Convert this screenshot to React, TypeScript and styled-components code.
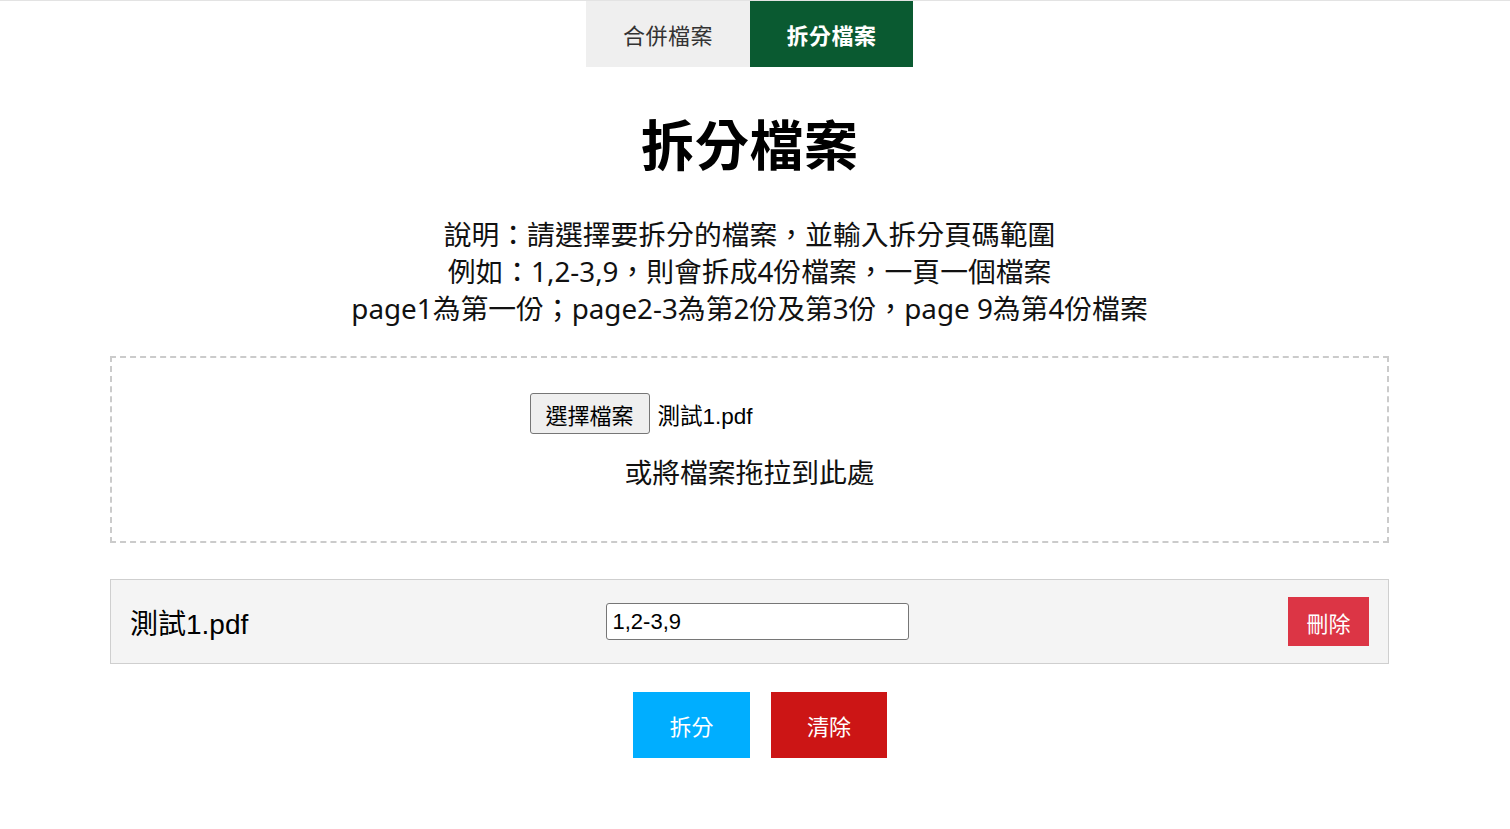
import React from "react";
import styled, { createGlobalStyle } from "styled-components";

const GlobalStyle = createGlobalStyle`
  html, body { margin: 0; padding: 0; background: #fff; }
  body {
    font-family: "Noto Sans", "Noto Sans CJK TC", sans-serif;
    color: #000;
    border-top: 1px solid #e3e3e3;
  }
  * { box-sizing: border-box; }
`;

const Page = styled.div`
  width: calc(100% - 11px);
  display: flex;
  flex-direction: column;
  align-items: center;
`;

const Tabs = styled.nav`
  display: flex;
`;

const Tab = styled.button<{ $active?: boolean }>`
  width: ${(p) => (p.$active ? "163px" : "164px")};
  height: 66px;
  border: none;
  margin: 0;
  padding: 0;
  font-family: "Noto Sans CJK TC", sans-serif;
  font-size: 22px;
  letter-spacing: 0.5px;
  font-weight: ${(p) => (p.$active ? 700 : 400)};
  background: ${(p) => (p.$active ? "#0a5a31" : "#efefef")};
  color: ${(p) => (p.$active ? "#fff" : "#333")};
  cursor: pointer;
`;

const Title = styled.h1`
  margin: 44px 0 0;
  font-family: "Noto Sans CJK TC", sans-serif;
  font-size: 54px;
  line-height: 64px;
  font-weight: 700;
  letter-spacing: 0.5px;
`;

const Description = styled.p`
  margin: 41px 0 0;
  font-family: "Noto Sans", "Noto Sans CJK TC", sans-serif;
  font-size: 27.8px;
  line-height: 37px;
  text-align: center;
  color: #111;
`;

const DescLine = styled.span`
  display: block;
  white-space: nowrap;
`;

const DropZone = styled.div`
  margin-top: 29px;
  width: 1279px;
  height: 187px;
  border: 2px dashed #cbcbcb;
  display: flex;
  flex-direction: column;
  align-items: center;
  padding-top: 35px;
`;

const FileInput = styled.div`
  width: 440px;
  display: flex;
  align-items: center;
  gap: 8px;
`;

const ChooseButton = styled.button`
  width: 120px;
  height: 41px;
  background: #efefef;
  border: 1px solid #767676;
  border-radius: 3px;
  font-family: "Noto Sans CJK TC", sans-serif;
  font-size: 22px;
  color: #000;
  padding: 0;
  line-height: 1;
`;

const FileName = styled.span`
  font-family: "Liberation Sans", "Noto Sans CJK TC", sans-serif;
  font-size: 22.5px;
  color: #000;
`;

const DropHint = styled.div`
  margin-top: 17px;
  font-family: "Noto Sans CJK TC", sans-serif;
  font-size: 27.8px;
  line-height: 40px;
  color: #111;
`;

const FileRow = styled.div`
  margin-top: 36px;
  width: 1279px;
  height: 85px;
  background: #f4f4f4;
  border: 1px solid #cfcfcf;
  display: flex;
  align-items: center;
  justify-content: space-between;
  padding: 0 19px 0 19px;
`;

const RowName = styled.span`
  font-family: "Liberation Sans", "Noto Sans CJK TC", sans-serif;
  font-size: 28px;
  color: #000;
  width: 118px;
  white-space: nowrap;
`;

const RangeInput = styled.input`
  width: 303px;
  height: 37px;
  margin-right: 22px;
  border: 1px solid #767676;
  border-radius: 3px;
  background: #fff;
  padding: 0 6px;
  font-family: "Liberation Sans", sans-serif;
  font-size: 22px;
  color: #000;
  outline: none;
`;

const DeleteButton = styled.button`
  width: 81px;
  height: 49px;
  border: none;
  background: #dc3545;
  color: #fff;
  font-family: "Noto Sans CJK TC", sans-serif;
  font-size: 22px;
  padding: 0;
  cursor: pointer;
`;

const Actions = styled.div`
  margin-top: 28px;
  display: flex;
  gap: 21px;
  padding-left: 21px;
`;

const ActionButton = styled.button<{ $color: string; $w: number }>`
  width: ${(p) => p.$w}px;
  height: 66px;
  border: none;
  background: ${(p) => p.$color};
  color: #fff;
  font-family: "Noto Sans CJK TC", sans-serif;
  font-size: 22px;
  padding: 0;
  cursor: pointer;
`;

export default function App() {
  return (
    <>
      <GlobalStyle />
      <Page>
        <Tabs>
          <Tab>合併檔案</Tab>
          <Tab $active>拆分檔案</Tab>
        </Tabs>
        <Title>拆分檔案</Title>
        <Description>
          <DescLine>說明：請選擇要拆分的檔案，並輸入拆分頁碼範圍</DescLine>
          <DescLine>例如：1,2-3,9，則會拆成4份檔案，一頁一個檔案</DescLine>
          <DescLine>page1為第一份；page2-3為第2份及第3份，page 9為第4份檔案</DescLine>
        </Description>
        <DropZone>
          <FileInput>
            <ChooseButton>選擇檔案</ChooseButton>
            <FileName>測試1.pdf</FileName>
          </FileInput>
          <DropHint>或將檔案拖拉到此處</DropHint>
        </DropZone>
        <FileRow>
          <RowName>測試1.pdf</RowName>
          <RangeInput defaultValue="1,2-3,9" />
          <DeleteButton>刪除</DeleteButton>
        </FileRow>
        <Actions>
          <ActionButton $color="#00aeff" $w={117}>拆分</ActionButton>
          <ActionButton $color="#cc1515" $w={116}>清除</ActionButton>
        </Actions>
      </Page>
    </>
  );
}
